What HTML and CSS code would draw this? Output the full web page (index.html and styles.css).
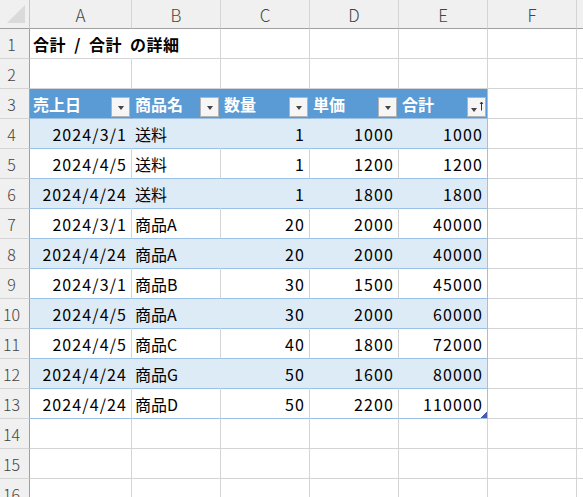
FILE: index.html
```html
<!DOCTYPE html>
<html lang="ja">
<head>
<meta charset="utf-8">
<title>Sheet</title>
<link rel="stylesheet" href="styles.css">
</head>
<body>
<div class="sheet">
  <div class="row colhead">
    <div class="corner"><svg width="29" height="28" viewBox="0 0 29 28"><polygon points="25,5 25,23 7,23" fill="#dadada"/></svg></div>
    <div class="ch">A</div><div class="ch">B</div><div class="ch">C</div><div class="ch">D</div><div class="ch">E</div><div class="ch">F</div><div class="ch"></div>
  </div>

  <div class="row">
    <div class="rh">1</div>
    <div class="c title">合計 / 合計 の詳細</div><div class="c"></div><div class="c"></div><div class="c"></div><div class="c"></div><div class="c"></div><div class="c"></div>
  </div>
  <div class="row">
    <div class="rh">2</div>
    <div class="c"></div><div class="c"></div><div class="c"></div><div class="c"></div><div class="c"></div><div class="c"></div><div class="c"></div>
  </div>
  <div class="row thead">
    <div class="rh">3</div>
    <div class="c th"><span>売上日</span><span class="fbtn"><i class="tri"></i></span></div>
    <div class="c th"><span>商品名</span><span class="fbtn"><i class="tri"></i></span></div>
    <div class="c th"><span>数量</span><span class="fbtn"><i class="tri"></i></span></div>
    <div class="c th"><span>単価</span><span class="fbtn"><i class="tri"></i></span></div>
    <div class="c th last"><span>合計</span><span class="fbtn sorted"><i class="tri"></i><svg class="arrow" width="5" height="10" viewBox="0 0 5 10"><path d="M2.5 1V9.5M1 3L2.5 1L4 3" stroke="#333" stroke-width="1" fill="none"/></svg></span></div>
    <div class="c"></div><div class="c"></div>
  </div>

  <div class="row band">
    <div class="rh">4</div>
    <div class="c n">2024/3/1</div><div class="c">送料</div><div class="c n">1</div><div class="c n">1000</div><div class="c n last">1000</div><div class="c"></div><div class="c"></div>
  </div>
  <div class="row body">
    <div class="rh">5</div>
    <div class="c n">2024/4/5</div><div class="c">送料</div><div class="c n">1</div><div class="c n">1200</div><div class="c n last">1200</div><div class="c"></div><div class="c"></div>
  </div>
  <div class="row band">
    <div class="rh">6</div>
    <div class="c n">2024/4/24</div><div class="c">送料</div><div class="c n">1</div><div class="c n">1800</div><div class="c n last">1800</div><div class="c"></div><div class="c"></div>
  </div>
  <div class="row body">
    <div class="rh">7</div>
    <div class="c n">2024/3/1</div><div class="c">商品A</div><div class="c n">20</div><div class="c n">2000</div><div class="c n last">40000</div><div class="c"></div><div class="c"></div>
  </div>
  <div class="row band">
    <div class="rh">8</div>
    <div class="c n">2024/4/24</div><div class="c">商品A</div><div class="c n">20</div><div class="c n">2000</div><div class="c n last">40000</div><div class="c"></div><div class="c"></div>
  </div>
  <div class="row body">
    <div class="rh">9</div>
    <div class="c n">2024/3/1</div><div class="c">商品B</div><div class="c n">30</div><div class="c n">1500</div><div class="c n last">45000</div><div class="c"></div><div class="c"></div>
  </div>
  <div class="row band">
    <div class="rh">10</div>
    <div class="c n">2024/4/5</div><div class="c">商品A</div><div class="c n">30</div><div class="c n">2000</div><div class="c n last">60000</div><div class="c"></div><div class="c"></div>
  </div>
  <div class="row body">
    <div class="rh">11</div>
    <div class="c n">2024/4/5</div><div class="c">商品C</div><div class="c n">40</div><div class="c n">1800</div><div class="c n last">72000</div><div class="c"></div><div class="c"></div>
  </div>
  <div class="row band">
    <div class="rh">12</div>
    <div class="c n">2024/4/24</div><div class="c">商品G</div><div class="c n">50</div><div class="c n">1600</div><div class="c n last">80000</div><div class="c"></div><div class="c"></div>
  </div>
  <div class="row body">
    <div class="rh">13</div>
    <div class="c n">2024/4/24</div><div class="c">商品D</div><div class="c n">50</div><div class="c n">2200</div><div class="c n last handle-cell">110000<span class="handle"></span></div><div class="c"></div><div class="c"></div>
  </div>

  <div class="row">
    <div class="rh">14</div>
    <div class="c"></div><div class="c"></div><div class="c"></div><div class="c"></div><div class="c"></div><div class="c"></div><div class="c"></div>
  </div>
  <div class="row">
    <div class="rh">15</div>
    <div class="c"></div><div class="c"></div><div class="c"></div><div class="c"></div><div class="c"></div><div class="c"></div><div class="c"></div>
  </div>
  <div class="row">
    <div class="rh">16</div>
    <div class="c"></div><div class="c"></div><div class="c"></div><div class="c"></div><div class="c"></div><div class="c"></div><div class="c"></div>
  </div>
</div>
</body>
</html>
```

FILE: styles.css
```css
* { box-sizing: border-box; }
html, body {
  margin: 0;
  padding: 0;
  width: 583px;
  height: 497px;
  overflow: hidden;
  background: #fff;
}
body {
  font-family: "Noto Sans CJK JP", "Noto Sans", sans-serif;
  font-size: 16px;
  color: #000;
}
.sheet {
  display: flex;
  flex-direction: column;
  width: 666px;
}
.row {
  display: grid;
  grid-template-columns: 30px 102px 89px 89px 89px 89px 89px 89px;
  height: 30px;
}
.colhead { height: 29px; }

.corner {
  background: #f0f0f0;
  border-right: 1px solid #c8c8c8;
  border-bottom: 1px solid #a0a0a0;
  display: flex;
}
.ch {
  background: #f0f0f0;
  border-right: 1px solid #d4d4d4;
  border-bottom: 1px solid #a0a0a0;
  color: #444;
  display: flex;
  align-items: center;
  justify-content: center;
  font-family: "Noto Sans CJK JP", sans-serif;
  font-weight: 300;
  font-size: 17px;
}
.rh {
  background: #f0f0f0;
  border-right: 1px solid #a0a0a0;
  border-bottom: 1px solid #d4d4d4;
  color: #444;
  display: flex;
  align-items: center;
  justify-content: center;
  padding-right: 6px;
  font-weight: 300;
  font-size: 16px;
}
.c {
  border-right: 1px solid #d4d4d4;
  border-bottom: 1px solid #d4d4d4;
  display: flex;
  align-items: center;
  padding: 1px 3px 0 3px;
  white-space: nowrap;
  min-width: 0;
}
.c.n {
  justify-content: flex-end;
  padding-right: 4px;
  letter-spacing: 1.1px;
}
.title {
  font-weight: bold;
  word-spacing: 4px;
  letter-spacing: 0.5px;
  border-right-color: transparent;
  overflow: visible;
  position: relative;
  z-index: 1;
}

.thead .th {
  background: #5b9bd5;
  color: #fff;
  font-weight: bold;
  border-right-color: #5b9bd5;
  border-bottom-color: #9bc2e6;
  justify-content: space-between;
  align-items: center;
  padding-right: 1px;
}
.thead .th.last { border-right-color: #9bc2e6; }
.fbtn {
  width: 19px;
  height: 20px;
  margin-top: 5px;
  background: #f6f6f6;
  border: 1px solid #b4b4b4;
  display: flex;
  align-items: center;
  justify-content: center;
  flex: none;
}
.tri {
  display: block;
  width: 0;
  height: 0;
  margin-top: 3px;
  border-left: 3.5px solid transparent;
  border-right: 3.5px solid transparent;
  border-top: 4px solid #444;
}
.fbtn.sorted { justify-content: flex-start; padding-left: 3px; gap: 2px; }
.fbtn.sorted .tri { margin-top: 7px; }
.arrow { display: block; margin-top: -1px; }

.band .c:not(.rh) { background: #ddebf7; }
.band .c,
.body .c { border-bottom-color: #9bc2e6; }
.band .c { border-right-color: #ddebf7; }
.band .c.last,
.body .c.last { border-right-color: #9bc2e6; }
.band .c:nth-child(n+7),
.body .c:nth-child(n+7) { background: #fff; border-right-color: #d4d4d4; border-bottom-color: #d4d4d4; }

.handle-cell { position: relative; }
.handle {
  position: absolute;
  right: 0;
  bottom: 0;
  width: 6px;
  height: 6px;
  background: linear-gradient(135deg, transparent 0 45%, #4a5bb0 45% 100%);
}
```
